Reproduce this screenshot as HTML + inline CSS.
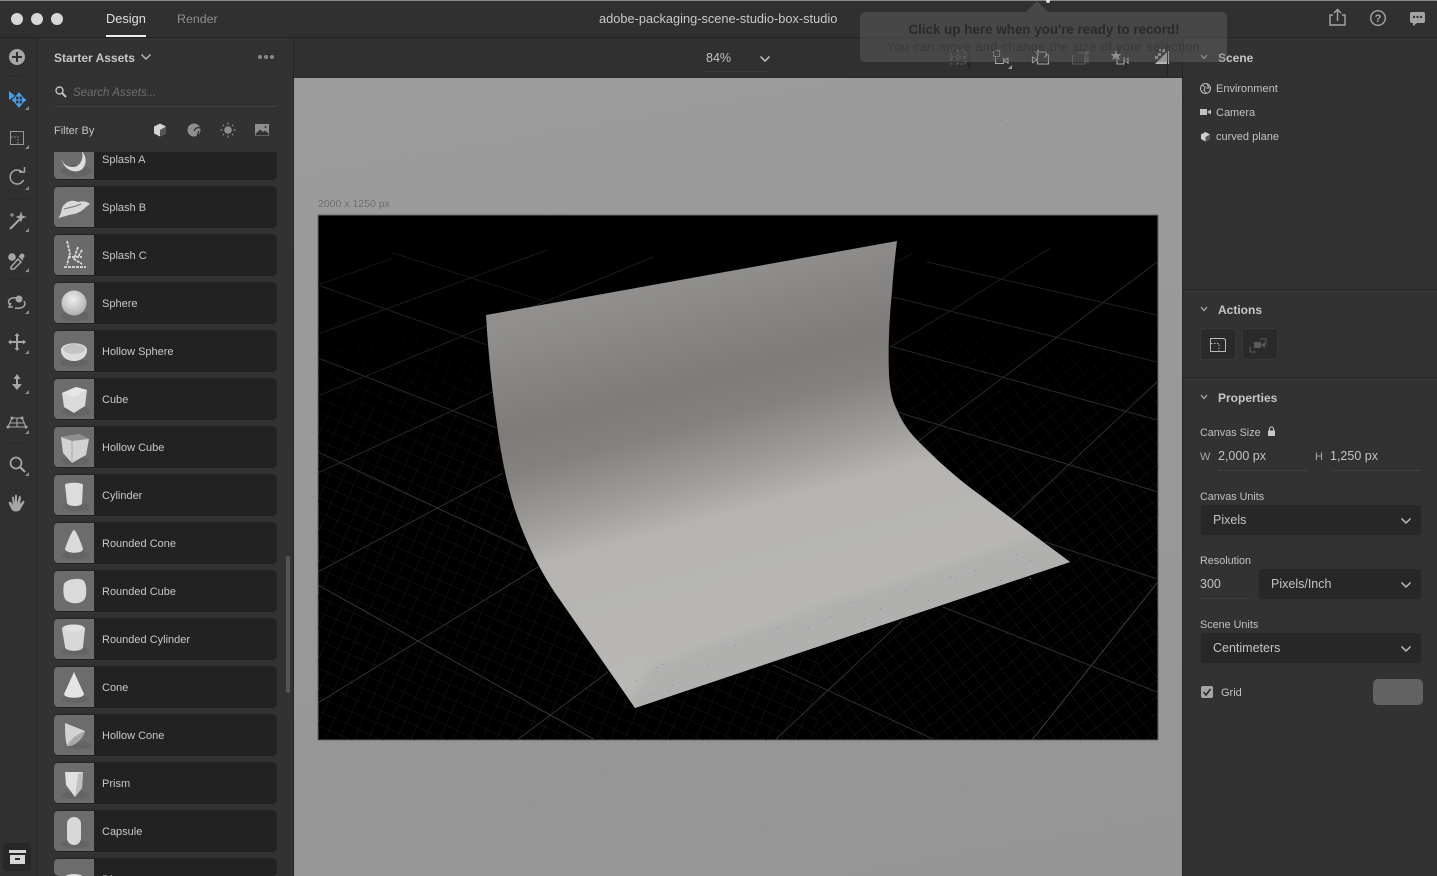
<!DOCTYPE html>
<html><head><meta charset="utf-8"><title>Dimension</title>
<style>
*{box-sizing:border-box}
html,body{margin:0;padding:0;width:1437px;height:876px;overflow:hidden;background:#323232}
body{position:relative;font-family:"Liberation Sans",sans-serif;color:#c4c4c4}
.a{position:absolute}
.t{position:absolute;white-space:nowrap;line-height:14px;font-size:11px;color:#c2c2c2;margin-top:1px}
.h{font-weight:bold;font-size:12px;color:#c6c6c6}
.row{position:absolute;left:54px;width:223px;height:42px;background:#222;border-radius:5px;overflow:hidden}
.row svg{position:absolute;left:0;top:1px;width:40px;height:40px;border-radius:4px 0 0 4px}
.row span{position:absolute;left:48px;top:15px;font-size:11px;line-height:14px;color:#c8c8c8;white-space:nowrap}
.dd{position:absolute;background:#272727;border-radius:4px;height:32px;border:1px dotted #3a3a3a;font-size:12.5px;line-height:30px;color:#c4c4c4;padding-left:12px}
.line{position:absolute;height:1px;border-bottom:1px dotted #4c4c4c}
.row ellipse.s{fill:#646464}
svg{display:block}
</style></head><body>

<!-- canvas area -->
<div class="a" style="left:294px;top:78px;width:889px;height:798px;background:linear-gradient(170deg,#9c9c9c,#959595)"></div>
<div class="t" style="left:318px;top:196px;font-size:10.5px;color:#6e6e6e">2000 x 1250 px</div>

<svg class="a" style="left:294px;top:78px" width="889" height="798" viewBox="294 78 889 798">
<g fill="#4a90d8">
<rect x="403" y="152" width="1" height="1"/><rect x="516" y="194" width="1" height="1"/><rect x="623" y="194" width="1" height="1"/><rect x="659" y="194" width="1" height="1"/><rect x="975" y="194" width="1" height="1"/><rect x="665" y="176" width="1" height="1"/><rect x="1000" y="120" width="1" height="1"/><rect x="905" y="160" width="1" height="1"/><rect x="600" y="770" width="1" height="1"/><rect x="535" y="802" width="1" height="1"/><rect x="413" y="780" width="1" height="1"/><rect x="960" y="790" width="1" height="1"/><rect x="1110" y="820" width="1" height="1"/><rect x="760" y="830" width="1" height="1"/><rect x="700" y="105" width="1" height="1"/>
</g>
</svg>

<svg class="a" style="left:317px;top:214px" width="842" height="527" viewBox="317 214 842 527">
<defs>
<pattern id="p1" width="13" height="13" patternUnits="userSpaceOnUse" patternTransform="rotate(24)"><path d="M0 0H13M0 0V13" stroke="#171717" stroke-width="1" fill="none"/></pattern>
<pattern id="p2" width="13" height="13" patternUnits="userSpaceOnUse" patternTransform="rotate(-38)"><path d="M0 0H13M0 0V13" stroke="#171717" stroke-width="1" fill="none"/></pattern>
<linearGradient id="fade" x1="0" y1="270" x2="0" y2="480" gradientUnits="userSpaceOnUse"><stop offset="0" stop-color="#fff" stop-opacity="0"/><stop offset="1" stop-color="#fff"/></linearGradient>
<mask id="m" maskUnits="userSpaceOnUse" x="317" y="214" width="842" height="527"><rect x="317" y="214" width="842" height="527" fill="url(#fade)"/></mask>
<linearGradient id="paper" gradientUnits="userSpaceOnUse" x1="690" y1="280" x2="798" y2="680">
<stop offset="0" stop-color="#908f8d"/><stop offset=".244" stop-color="#7e7b79"/><stop offset=".34" stop-color="#84817f"/><stop offset=".47" stop-color="#9e9c99"/><stop offset=".57" stop-color="#b5b4b0"/><stop offset="1" stop-color="#bab9b6"/>
</linearGradient>
<clipPath id="pc"><path d="M486 315L897 241C895 258 893 275 892 292C889 320 888 350 889 375C890 392 893 402 897 410C903 424 910 433 920 443C935 458 952 474 972 489L1070 562L635 708L560 600C540 572 525 540 515 510C507 485 501 455 497 425C492 390 488 350 486 315Z"/></clipPath>
<filter id="bl" x="-10%" y="-10%" width="120%" height="120%"><feGaussianBlur stdDeviation="4"/></filter>
</defs>
<rect x="318" y="215" width="840" height="525" fill="#000" stroke="#6a6a6a" stroke-width="1"/>
<g mask="url(#m)">
<rect x="318" y="215" width="500" height="525" fill="url(#p1)"/>
<rect x="818" y="215" width="340" height="525" fill="url(#p2)"/>
</g>
<g fill="none" stroke="#343434" stroke-width=".9">
<path d="M393 253L547 302" stroke="#181818"/>
<path d="M318 285L487 345" stroke="#242424"/>
<path d="M318 358L497 428" stroke="#2e2e2e"/>
<path d="M318 452L527 550"/>
<path d="M318 585L595 740" stroke="#3a3a3a"/>
<path d="M318 285L393 258" stroke="#181818"/>
<path d="M318 334L547 250" stroke="#1e1e1e"/>
<path d="M318 396L653 257" stroke="#222"/>
<path d="M318 473L497 390" stroke="#2c2c2c"/>
<path d="M318 572L503 473"/>
<path d="M318 703L538 567"/>
<path d="M517 740L608 672"/>
<path d="M927 262L1157 315" stroke="#202020"/>
<path d="M893 297L1157 362" stroke="#282828"/>
<path d="M890 346L1157 420" stroke="#2e2e2e"/>
<path d="M897 412L1158 492"/>
<path d="M1045 542L1157 579"/>
<path d="M943 607L1157 692"/>
<path d="M773 665L935 740"/>
<path d="M897 262L913 253" stroke="#181818"/>
<path d="M952 310L1050 248" stroke="#1e1e1e"/>
<path d="M890 347L950 311" stroke="#242424"/>
<path d="M917 442L1157 262" stroke="#2e2e2e"/>
<path d="M1012 518L1157 382"/>
<path d="M775 740L903 620"/>
<path d="M1032 740L1157 583" stroke="#444"/>
</g>
<path d="M486 315L897 241C895 258 893 275 892 292C889 320 888 350 889 375C890 392 893 402 897 410C903 424 910 433 920 443C935 458 952 474 972 489L1070 562L635 708L560 600C540 572 525 540 515 510C507 485 501 455 497 425C492 390 488 350 486 315Z" fill="url(#paper)"/>
<g clip-path="url(#pc)"><path d="M620 720L650 668L700 648L760 628L830 602L905 580L1000 548L1050 530L1090 565L640 730Z" fill="#b0b0ae" filter="url(#bl)"/></g>
<g fill="#4aa0f0">
<rect x="656" y="667" width="1" height="1"/><rect x="662" y="664" width="1" height="1"/><rect x="636" y="680" width="1" height="1"/><rect x="650" y="695" width="1" height="1"/><rect x="668" y="690" width="1" height="1"/><rect x="672" y="685" width="1" height="1"/><rect x="690" y="670" width="1" height="1"/><rect x="708" y="665" width="1" height="1"/><rect x="722" y="665" width="1" height="1"/><rect x="735" y="645" width="1" height="1"/><rect x="750" y="668" width="1" height="1"/><rect x="770" y="634" width="1" height="1"/><rect x="777" y="628" width="1" height="1"/><rect x="790" y="645" width="1" height="1"/><rect x="808" y="627" width="1" height="1"/><rect x="830" y="616" width="1" height="1"/><rect x="850" y="602" width="1" height="1"/><rect x="864" y="618" width="1" height="1"/><rect x="880" y="608" width="1" height="1"/><rect x="905" y="590" width="1" height="1"/><rect x="928" y="600" width="1" height="1"/><rect x="950" y="576" width="1" height="1"/><rect x="955" y="578" width="1" height="1"/><rect x="975" y="570" width="1" height="1"/><rect x="1000" y="580" width="1" height="1"/><rect x="1010" y="566" width="1" height="1"/><rect x="1016" y="554" width="1" height="1"/><rect x="1030" y="560" width="1" height="1"/><rect x="1045" y="544" width="1" height="1"/><rect x="1056" y="566" width="1" height="1"/><rect x="1030" y="578" width="1" height="1"/>
</g>
</svg>

<!-- center toolbar -->
<div class="a" style="left:294px;top:38px;width:889px;height:40px;background:#303030;border-bottom:1px solid #2a2a2a"></div>
<div class="t" style="left:706px;top:50px;font-size:12.5px">84%</div>
<svg class="a" style="left:759px;top:54px" width="12" height="10"><path d="M1.500 2.500L6 7L10.500 2.500" fill="none" stroke="#c4c4c4" stroke-width="1.500"/></svg>
<div class="line" style="left:705px;top:71px;width:62px;opacity:.6"></div>
<svg class="a" style="left:940px;top:40px" width="240" height="36" viewBox="0 0 240 36" fill="none" stroke="#a8a8a8" stroke-width="1.100">
<g stroke="#5c5c5c"><rect x="11" y="10" width="14" height="14" stroke-dasharray="3 2"/><path d="M18 10V24M11 17H25" stroke-dasharray="2 2"/></g>
<path d="M29 9V29" stroke="#1e1e1e"/>
<rect x="53.500" y="10.500" width="6" height="6" stroke-dasharray="2 1"/><path d="M55.500 17.500V23.500H63.500V17.500M63.500 20.500L68 18V23L63.500 20.500"/>
<path d="M68 29H72V25Z" fill="#999" stroke="none"/>
<path d="M97.500 15V24H108.500V15H105M97.500 19.500L92.500 17V22.500L97.500 19.500M99 10L95 12L99 15M96 12H104C108 12 107 17 104 17"/>
<g stroke="#5c5c5c"><path d="M132.500 15V24H145V15M145 19.500L148 17V22.500L145 19.500M145 11L149 13L145 15M148 13H138"/></g>
<path d="M177 17V24H184V17M184 20.500L188 18V23L184 20.500"/>
<path d="M176 10L177.500 14H181.500L178.500 16.500L180 20L176 18L172 20L173.500 16.500L170.500 14H174.500Z" fill="#a8a8a8" stroke="none"/>
<path d="M186 9V29" stroke="#1e1e1e"/>
<path d="M215 24L229 10V24Z" fill="#b6b6b6" stroke="none"/>
<g fill="#a0a0a0" stroke="none"><rect x="222" y="9" width="3" height="3"/><rect x="218" y="13" width="3" height="3"/><rect x="215" y="16" width="3" height="3"/><rect x="219" y="9" width="2" height="2"/></g>
</svg>
<div class="a" style="left:1167px;top:38px;width:1px;height:40px;background:#222"></div>

<!-- top bar -->
<div class="a" style="left:0;top:0;width:1437px;height:38px;background:#303030;border-top:1px solid #8a8a8a;border-bottom:1px solid #242424"></div>
<div class="a" style="left:11px;top:13px;width:12px;height:12px;border-radius:50%;background:#d8d8d8"></div>
<div class="a" style="left:31px;top:13px;width:12px;height:12px;border-radius:50%;background:#d8d8d8"></div>
<div class="a" style="left:51px;top:13px;width:12px;height:12px;border-radius:50%;background:#d8d8d8"></div>
<div class="t" style="left:106px;top:11px;font-size:12.800px;color:#e0e0e0">Design</div>
<div class="t" style="left:177px;top:11px;font-size:12.400px;color:#8e8e8e">Render</div>
<div class="a" style="left:106px;top:35px;width:40px;height:2px;background:#eee"></div>
<div class="t" style="left:599px;top:11px;font-size:12.800px;color:#c8c8c8">adobe-packaging-scene-studio-box-studio</div>
<svg class="a" style="left:1328px;top:8px" width="100" height="20" viewBox="0 0 100 20" fill="none" stroke="#a4a4a4" stroke-width="1.400">
<path d="M5 7H2V17H17V7H14M9.500 13V2M6 5L9.500 1.500L13 5"/>
<circle cx="50" cy="10" r="7.300"/>
<text x="50" y="14" font-family="Liberation Sans" font-size="11" font-weight="bold" fill="#a4a4a4" stroke="none" text-anchor="middle">?</text>
<path d="M84 4H95A2 2 0 0 1 97 6V13A2 2 0 0 1 95 15H89L85 18V15H84A2 2 0 0 1 82 13V6A2 2 0 0 1 84 4Z" fill="#a4a4a4" stroke="none"/>
<g fill="#303030" stroke="none"><circle cx="86" cy="9" r="1.200"/><circle cx="89.500" cy="9" r="1.200"/><circle cx="93" cy="9" r="1.200"/></g>
</svg>

<!-- left toolbar -->
<div class="a" style="left:0;top:38px;width:38px;height:838px;background:#303030;border-right:1px solid #262626"></div>
<svg class="a" style="left:0;top:38px" width="38" height="838" viewBox="0 38 38 838" fill="none" stroke="#a6a6a6" stroke-width="1.500">
<circle cx="17" cy="57" r="8" fill="#a6a6a6" stroke="none"/><path d="M12 57H22M17 52V62" stroke="#303030" stroke-width="2"/>
<path d="M5 76H29M5 199H29M5 279H29M5 443H29" stroke="#232323" stroke-width="1" stroke-dasharray="2 1"/>
<path d="M9 91L15 96L9 100Z" fill="#4a9de8" stroke="none"/>
<path d="M19 94V106M13 100H25M19 93L16.500 96H21.500ZM19 107L16.500 104H21.500ZM12.500 100L15.500 97.500V102.500ZM25.500 100L22.500 97.500V102.500Z" stroke="#4a9de8" fill="#4a9de8" stroke-width="1.200"/>
<rect x="10.500" y="131.500" width="13" height="13" stroke="#999" stroke-width="1"/><path d="M11 137H18V144" stroke="#999" stroke-width="1" stroke-dasharray="1.500 1.500"/>
<path d="M22.500 172.500A7 7 0 1 0 23.500 180" /><path d="M19 172H24.500V167" stroke-width="1.500"/>
<path d="M10 229L20 219" stroke-width="2"/><path d="M21 213L22 216L25 217L22 218L21 221L20 218L17 217L20 216ZM12 213V217M10 215H14" stroke-width="1" fill="#a6a6a6"/>
<circle cx="12" cy="257" r="3.800" fill="#a6a6a6" stroke="none"/><path d="M11 267L18 259L21 262L14 269L11 269ZM19 256L23 260" /><circle cx="22" cy="256" r="2.500" fill="#a6a6a6" stroke="none"/>
<path d="M10 305C6 300 11 297 17 298M24 301C27 306 22 309 15 308M11 303L9 307L13 307"/><circle cx="19" cy="299" r="3.500" fill="#a6a6a6" stroke="none"/>
<path d="M10 342H24M17 335V349" stroke-width="2"/><path d="M17 333L14.500 336H19.500ZM17 351L14.500 348H19.500ZM8 342L11 339.500V344.500ZM26 342L23 339.500V344.500Z" fill="#a6a6a6" stroke="none"/>
<path d="M17 377V386" stroke-width="2"/><path d="M17 374L13.500 379H20.500ZM12 384H22L17 390Z" fill="#a6a6a6" stroke="none"/>
<path d="M12 418H22L26 427H8ZM17 418V427M10 423H24" stroke-width="1.100"/><g fill="#a6a6a6" stroke="none"><circle cx="12" cy="418" r="1.500"/><circle cx="22" cy="418" r="1.500"/><circle cx="8" cy="427" r="1.500"/><circle cx="26" cy="427" r="1.500"/></g>
<circle cx="16" cy="463" r="5.500" stroke-width="1.700"/><path d="M20 467L25 472" stroke-width="2.200"/>
<path d="M12 510C10 506 8 503 9 502C10 501 12 503 13 505L12 498C12 496 14 496 14 498L15 503V496C15 494 17 494 17 496V503L19 497C19 495 21 496 21 498L20 504L23 501C24 500 25 501 24 503L20 510C18 512 14 512 12 510Z" fill="#a6a6a6" stroke="none"/>
<g fill="#8a8a8a" stroke="none">
<path d="M29 110L25 110L29 106Z"/><path d="M29 149L25 149L29 145Z"/><path d="M29 190L25 190L29 186Z"/><path d="M29 232L25 232L29 228Z"/><path d="M29 272L25 272L29 268Z"/><path d="M29 314L25 314L29 310Z"/><path d="M29 354L25 354L29 350Z"/><path d="M29 394L25 394L29 390Z"/><path d="M29 434L25 434L29 430Z"/><path d="M29 476L25 476L29 472Z"/>
</g>
<rect x="3" y="843" width="28" height="28" rx="4" fill="#272727" stroke="none"/>
<path d="M9 850H26V853H9ZM10 855H25V864H10Z" fill="#d6d6d6" stroke="none"/><path d="M15 858H20V860H15Z" fill="#272727" stroke="none"/>
</svg>

<!-- left panel -->
<div class="a" style="left:38px;top:38px;width:256px;height:838px;background:#323232;border-right:1px solid #262626"></div>
<div class="t h" style="left:54px;top:50px">Starter Assets</div>
<svg class="a" style="left:140px;top:52px" width="12" height="10"><path d="M1.500 2.500L6 7L10.500 2.500" fill="none" stroke="#bbb" stroke-width="1.400"/></svg>
<div class="a" style="left:258px;top:55px;width:4px;height:4px;border-radius:50%;background:#888"></div>
<div class="a" style="left:264px;top:55px;width:4px;height:4px;border-radius:50%;background:#888"></div>
<div class="a" style="left:270px;top:55px;width:4px;height:4px;border-radius:50%;background:#888"></div>
<svg class="a" style="left:54px;top:85px" width="14" height="14" fill="none" stroke="#c0c0c0"><circle cx="5.500" cy="5.500" r="3.500" stroke-width="1.400"/><path d="M8 8L12 12" stroke-width="2"/></svg>
<div class="t" style="left:73px;top:85px;font-style:italic;font-size:11.500px;color:#6e6e6e">Search Assets...</div>
<div class="line" style="left:54px;top:106px;width:223px"></div>
<div class="t" style="left:54px;top:123px;font-size:11px">Filter By</div>
<svg class="a" style="left:150px;top:120px" width="122" height="20" viewBox="0 0 122 20">
<path d="M10 3.500L16 6.500V13.500L10 16.500L4 13.500V6.500Z" fill="#d4d4d4"/><path d="M10 10L16 6.500V13.500L10 16.500Z" fill="#555"/>
<circle cx="44" cy="10" r="6.500" fill="#8e8e8e"/><path d="M44 11C46 7 49 7 51 8.500" stroke="#323232" stroke-width="1.300" fill="none"/><path d="M47 16L49 11" stroke="#323232" stroke-width="1.300"/>
<circle cx="78" cy="10" r="3.800" fill="#8e8e8e"/><path d="M78 2.500V4.500M78 15.500V17.500M70.500 10H72.500M83.500 10H85.500M72.700 4.700L74 6M82 14L83.300 15.300M72.700 15.300L74 14M82 6L83.300 4.700" stroke="#8e8e8e" stroke-width="1.200"/>
<rect x="105" y="4" width="14" height="12" fill="#8e8e8e"/><path d="M105.500 14L110 9.500L113 12L115 10.500L118.500 13.500V15.500H105.500Z" fill="#323232"/><circle cx="115.500" cy="7" r="1" fill="#323232"/>
</svg>

<div class="a" style="left:38px;top:152px;width:248px;height:724px;overflow:hidden">
<div class="a" style="left:-38px;top:-152px;width:300px;height:876px">
<div class="row" style="top:138px"><svg viewBox="0 0 40 40"><rect width="40" height="40" fill="#6c6c6c"/><ellipse class="s" cx="22" cy="32" rx="15" ry="6"/><path d="M8 20C9 30 20 35 27 31C33 27 33 18 28 12C30 20 26 28 19 28C13 28 9 25 8 20Z" fill="#dedede"/></svg><span>Splash A</span></div>
<div class="row" style="top:186px"><svg viewBox="0 0 40 40"><rect width="40" height="40" fill="#6c6c6c"/><path d="M4 31C8 28 7 20 10 18C14 13 20 13 24 15C28 14 33 14 36 17C32 19 29 25 20 27C14 28 9 30 4 31Z" fill="#d8d8d8"/><path d="M10 22L22 19L27 17" stroke="#777" fill="none"/></svg><span>Splash B</span></div>
<div class="row" style="top:234px"><svg viewBox="0 0 40 40"><rect width="40" height="40" fill="#6a6a6a"/><path d="M13 6L16 18L13 30M24 12L20 24L28 29M10 32H32M14 22H28M28 15L24 22" stroke="#dcdcdc" stroke-width="1.800" fill="none" stroke-dasharray="3 1"/></svg><span>Splash C</span></div>
<div class="row" style="top:282px"><svg viewBox="0 0 40 40"><defs><radialGradient id="sph" cx=".45" cy=".35" r=".7"><stop offset="0" stop-color="#eee"/><stop offset="1" stop-color="#aaa"/></radialGradient></defs><rect width="40" height="40" fill="#6c6c6c"/><ellipse class="s" cx="21" cy="33" rx="14" ry="5"/><circle cx="20" cy="20" r="12.500" fill="url(#sph)"/></svg><span>Sphere</span></div>
<div class="row" style="top:330px"><svg viewBox="0 0 40 40"><rect width="40" height="40" fill="#6c6c6c"/><ellipse class="s" cx="21" cy="32" rx="15" ry="4"/><path d="M7 19C7 10 33 10 33 19C33 26 27 30 20 30C13 30 7 26 7 19Z" fill="#dcdcdc"/><ellipse cx="20" cy="18" rx="11" ry="5" fill="#c4c4c4"/></svg><span>Hollow Sphere</span></div>
<div class="row" style="top:378px"><svg viewBox="0 0 40 40"><rect width="40" height="40" fill="#6c6c6c"/><ellipse class="s" cx="22" cy="32" rx="14" ry="5"/><path d="M8 14L22 8L33 11L31 27L20 34L10 28Z" fill="#dadada"/><path d="M8 14L20 18L33 11L22 8Z" fill="#e6e6e6"/></svg><span>Cube</span></div>
<div class="row" style="top:426px"><svg viewBox="0 0 40 40"><rect width="40" height="40" fill="#6c6c6c"/><ellipse class="s" cx="22" cy="34" rx="14" ry="4"/><path d="M7 10L25 7L35 12L32 28L18 36L9 26Z" fill="#d2d2d2"/><path d="M7 10L18 14L35 12L25 7Z" fill="#8e8e8e"/><path d="M18 14L18 36" stroke="#aaa"/></svg><span>Hollow Cube</span></div>
<div class="row" style="top:474px"><svg viewBox="0 0 40 40"><rect width="40" height="40" fill="#6c6c6c"/><ellipse class="s" cx="22" cy="32" rx="14" ry="4"/><path d="M11 10C11 7 29 7 29 10L28 28C28 32 14 32 13 28Z" fill="#dcdcdc"/></svg><span>Cylinder</span></div>
<div class="row" style="top:522px"><svg viewBox="0 0 40 40"><rect width="40" height="40" fill="#6c6c6c"/><ellipse class="s" cx="22" cy="32" rx="14" ry="4"/><path d="M20 7C22 7 28 22 29 26C29 31 12 31 11 26C12 22 18 7 20 7Z" fill="#dadada"/></svg><span>Rounded Cone</span></div>
<div class="row" style="top:570px"><svg viewBox="0 0 40 40"><rect width="40" height="40" fill="#6c6c6c"/><path d="M10 13C12 8 26 6 30 10C33 14 33 26 30 29C25 34 15 33 11 28C9 24 9 17 10 13Z" fill="#dadada"/></svg><span>Rounded Cube</span></div>
<div class="row" style="top:618px"><svg viewBox="0 0 40 40"><rect width="40" height="40" fill="#6c6c6c"/><ellipse class="s" cx="22" cy="32" rx="14" ry="4"/><path d="M8 10C8 4 31 4 31 10L29 28C29 33 11 33 11 28Z" fill="#d8d8d8"/><ellipse cx="20" cy="9" rx="10" ry="3.500" fill="#e2e2e2"/></svg><span>Rounded Cylinder</span></div>
<div class="row" style="top:666px"><svg viewBox="0 0 40 40"><rect width="40" height="40" fill="#6c6c6c"/><ellipse class="s" cx="22" cy="32" rx="14" ry="4"/><path d="M20 5L30 27C30 32 10 32 10 27Z" fill="#e4e4e4"/></svg><span>Cone</span></div>
<div class="row" style="top:714px"><svg viewBox="0 0 40 40"><rect width="40" height="40" fill="#6c6c6c"/><ellipse class="s" cx="24" cy="30" rx="14" ry="4"/><path d="M11 8L31 16C29 24 20 32 13 31C11 24 11 16 11 8Z" fill="#d2d2d2"/><path d="M13 31C16 24 24 19 31 16C29 24 20 32 13 31Z" fill="#a8a8a8"/></svg><span>Hollow Cone</span></div>
<div class="row" style="top:762px"><svg viewBox="0 0 40 40"><rect width="40" height="40" fill="#6c6c6c"/><ellipse class="s" cx="22" cy="32" rx="14" ry="4"/><path d="M11 9L29 9L28 25L21 34L12 22Z" fill="#e0e0e0"/><path d="M24 11L29 9L28 25L21 34Z" fill="#c0c0c0"/></svg><span>Prism</span></div>
<div class="row" style="top:810px"><svg viewBox="0 0 40 40"><rect width="40" height="40" fill="#6c6c6c"/><ellipse class="s" cx="22" cy="33" rx="14" ry="4"/><rect x="13" y="6" width="14" height="28" rx="7" fill="#d8d8d8"/></svg><span>Capsule</span></div>
<div class="row" style="top:858px;height:18px"><svg viewBox="0 0 40 17" style="height:17px"><rect width="40" height="17" fill="#6c6c6c"/><ellipse cx="20" cy="24" rx="14" ry="9" fill="#dcdcdc"/></svg><span style="height:3px;overflow:hidden">Disc</span></div>
</div></div>
<div class="a" style="left:286px;top:556px;width:4px;height:137px;border-radius:2px;background:#555"></div>

<!-- right panel -->
<div class="a" style="left:1182px;top:38px;width:255px;height:838px;background:#323232;border-left:1px solid #262626"></div>
<div class="a" style="left:1183px;top:289px;width:254px;height:1px;background:#262626"></div>
<div class="a" style="left:1183px;top:377px;width:254px;height:1px;background:#262626"></div>
<svg class="a" style="left:1198px;top:52px" width="12" height="10"><path d="M3 3L6 6.500L9 3" fill="none" stroke="#aaa" stroke-width="1.300"/></svg>
<svg class="a" style="left:1198px;top:304px" width="12" height="10"><path d="M3 3L6 6.500L9 3" fill="none" stroke="#aaa" stroke-width="1.300"/></svg>
<svg class="a" style="left:1198px;top:392px" width="12" height="10"><path d="M3 3L6 6.500L9 3" fill="none" stroke="#aaa" stroke-width="1.300"/></svg>
<div class="t h" style="left:1218px;top:50px">Scene</div>
<div class="t h" style="left:1218px;top:302px">Actions</div>
<div class="t h" style="left:1218px;top:390px">Properties</div>
<svg class="a" style="left:1199px;top:80px" width="14" height="64" viewBox="0 0 14 64" fill="none" stroke="#b8b8b8">
<circle cx="6.500" cy="8.500" r="5" stroke-width="1.100"/><path d="M3 5L6 7L5 10L7 13M8 4L10 8L7 8" stroke-width="1"/>
<rect x="1" y="29" width="7" height="6" fill="#c2c2c2" stroke="none"/><path d="M8 32L12 29.500V34.500Z" fill="#c2c2c2" stroke="none"/>
<path d="M6.500 52L11 54.500V59L6.500 61.500L2 59V54.500Z" fill="#d0d0d0" stroke="none"/><path d="M6.500 57L11 54.500V59L6.500 61.500Z" fill="#555" stroke="none"/>
</svg>
<div class="t" style="left:1216px;top:81px">Environment</div>
<div class="t" style="left:1216px;top:105px">Camera</div>
<div class="t" style="left:1216px;top:129px">curved plane</div>
<div class="a" style="left:1200px;top:328px;width:36px;height:32px;border-radius:4px;background:#2a2a2a;border:1px dotted #444"></div>
<div class="a" style="left:1242px;top:328px;width:36px;height:32px;border-radius:4px;background:#2a2a2a;border:1px dotted #444"></div>
<svg class="a" style="left:1200px;top:328px" width="78" height="32" viewBox="0 0 78 32" fill="none">
<path d="M10.500 10.500H24L25.500 12V23.500H10.500Z" stroke="#b8b8b8"/><path d="M11 15.500H19V23" stroke="#b8b8b8" stroke-dasharray="1.500 1.500"/>
<path d="M60 11H66V17M50 18V24H56" stroke="#5a5a5a"/><rect x="54" y="14" width="7" height="6" fill="#5a5a5a"/><path d="M61 17L65 14V20Z" fill="#5a5a5a"/>
</svg>

<div class="t" style="left:1200px;top:425px;font-size:10.800px">Canvas Size</div>
<svg class="a" style="left:1267px;top:426px" width="9" height="11"><rect x="1" y="4.500" width="7" height="5.500" fill="#c8c8c8"/><path d="M2.500 5V3A2 2 0 0 1 6.500 3V5" fill="none" stroke="#c8c8c8"/></svg>
<div class="t" style="left:1200px;top:449px;font-size:11px;color:#a8a8a8">W</div>
<div class="t" style="left:1218px;top:448px;font-size:12.500px">2,000 px</div>
<div class="t" style="left:1315px;top:449px;font-size:11px;color:#a8a8a8">H</div>
<div class="t" style="left:1330px;top:448px;font-size:12.500px">1,250 px</div>
<div class="line" style="left:1219px;top:470px;width:88px"></div>
<div class="line" style="left:1332px;top:470px;width:89px"></div>
<div class="t" style="left:1200px;top:489px;font-size:10.800px">Canvas Units</div>
<div class="dd" style="left:1200px;top:504px;width:222px">Pixels</div>
<div class="t" style="left:1200px;top:553px;font-size:10.800px">Resolution</div>
<div class="t" style="left:1200px;top:576px;font-size:12.500px">300</div>
<div class="line" style="left:1200px;top:598px;width:49px"></div>
<div class="dd" style="left:1258px;top:568px;width:164px">Pixels/Inch</div>
<div class="t" style="left:1200px;top:617px;font-size:10.800px">Scene Units</div>
<div class="dd" style="left:1200px;top:632px;width:222px">Centimeters</div>
<svg class="a" style="left:1400px;top:515px" width="12" height="140" viewBox="0 0 12 140" fill="none" stroke="#bcbcbc" stroke-width="1.500"><path d="M1.500 3.500L6 8L10.500 3.500M1.500 67.500L6 72L10.500 67.500M1.500 131.500L6 136L10.500 131.500"/></svg>
<div class="a" style="left:1201px;top:686px;width:12px;height:12px;border-radius:2px;background:#a6a6a6"></div>
<svg class="a" style="left:1201px;top:686px" width="12" height="12"><path d="M2.500 6L5 9L9.500 3" fill="none" stroke="#2e2e2e" stroke-width="1.700"/></svg>
<div class="t" style="left:1221px;top:685px">Grid</div>
<div class="a" style="left:1373px;top:679px;width:50px;height:26px;border-radius:5px;background:#626262"></div>

<!-- tooltip -->
<div class="a" style="left:860px;top:12px;width:367px;height:50px;border-radius:5px;background:rgba(105,105,105,.42)"></div>
<svg class="a" style="left:1020px;top:0" width="36" height="13"><path d="M6 12L17 1L28 12Z" fill="rgba(105,105,105,.42)"/></svg>
<div class="a" style="left:1046px;top:0;width:4px;height:3px;background:#ddd;border-radius:0 0 2px 2px"></div>
<div class="t" style="left:860px;top:22px;width:367px;text-align:center;font-weight:bold;font-size:13.400px;color:#2a2a2a;padding-left:1px">Click up here when you're ready to record!</div>
<div class="t" style="left:860px;top:39px;width:367px;text-align:center;font-size:12.500px;color:#3a3a3a;letter-spacing:.5px">You can move and change the size of your selection</div>
</body></html>
